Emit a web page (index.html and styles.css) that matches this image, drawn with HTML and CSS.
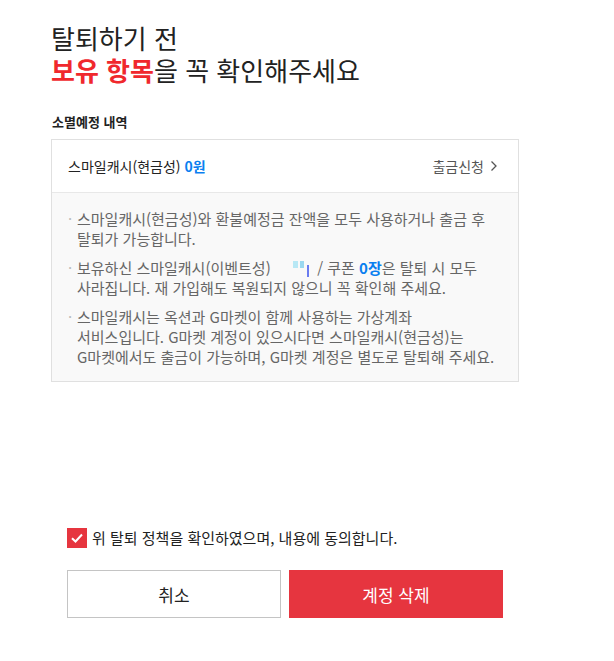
FILE: index.html
```html
<!DOCTYPE html>
<html lang="ko">
<head>
    <meta charset="UTF-8">
    <meta name="viewport" content="width=device-width, initial-scale=1.0">
    <title>회원탈퇴</title>
    <link rel="stylesheet" href="styles.css">
</head>
<body>
    <div class="page">
        <h1 class="title"><span class="line">탈퇴하기 전</span><span class="line"><em>보유 항목</em>을 꼭 확인해주세요</span></h1>

        <h2 class="section-label">소멸예정 내역</h2>
        <div class="box">
            <div class="box-head">
                <span>스마일캐시(현금성) <b class="num">0원</b></span>
                <a class="link" href="#">출금신청 <svg width="8" height="12" viewBox="0 0 8 12"><path d="M1.5 1.5 L6 6 L1.5 10.5" fill="none" stroke="#555" stroke-width="1.3"/></svg></a>
            </div>
            <ul class="notice">
                <li>스마일캐시(현금성)와 환불예정금 잔액을 모두 사용하거나 출금 후<br>탈퇴가 가능합니다.</li>
                <li>보유하신 스마일캐시(이벤트성) <span class="loading"><i class="a"></i><i class="b"></i><i class="c"></i></span> / 쿠폰 <b class="num">0장</b>은 탈퇴 시 모두<br>사라집니다. 재 가입해도 복원되지 않으니 꼭 확인해 주세요.</li>
                <li>스마일캐시는 옥션과 G마켓이 함께 사용하는 가상계좌<br>서비스입니다. G마켓 계정이 있으시다면 스마일캐시(현금성)는<br>G마켓에서도 출금이 가능하며, G마켓 계정은 별도로 탈퇴해 주세요.</li>
            </ul>
        </div>

        <div class="footer">
            <label class="agree">
                <span class="check"><svg width="20" height="20" viewBox="0 0 20 20"><path d="M5 10.2 L8.5 13.5 L15 6.5" fill="none" stroke="#fff" stroke-width="2"/></svg></span>
                위 탈퇴 정책을 확인하였으며, 내용에 동의합니다.
            </label>
            <div class="buttons">
                <button class="btn cancel">취소</button>
                <button class="btn delete">계정 삭제</button>
            </div>
        </div>
    </div>
</body>
</html>
```

FILE: styles.css
```css
body {
    margin: 0;
    font-family: "Noto Sans CJK KR", "Noto Sans", sans-serif;
    color: #222;
    background: #fff;
}

.page {
    width: 468px;
    padding: 22px 0 0 51px;
}

.title {
    margin: 0;
    font-size: 26px;
    line-height: 32px;
    font-weight: 400;
    color: #222;
}

.title .line {
    display: block;
}

.title em {
    font-style: normal;
    font-weight: 700;
    color: #f0282d;
}

.section-label {
    margin: 27px 0 0 1px;
    font-size: 13px;
    line-height: 18px;
    font-weight: 700;
}

.box {
    margin-top: 8px;
    border: 1px solid #e0e0e0;
}

.box-head {
    height: 52px;
    display: flex;
    justify-content: space-between;
    align-items: center;
    padding: 0 20px 0 16px;
    border-bottom: 1px solid #e8e8e8;
    font-size: 14px;
}

.num {
    color: #0a7ff0;
    font-weight: 700;
}

.link {
    display: flex;
    align-items: center;
    gap: 6px;
    color: #555;
    text-decoration: none;
}

.notice {
    margin: 0;
    padding: 16px 4px 14px 17px;
    background: #f9f9f9;
    list-style: none;
    font-size: 15px;
    line-height: 20px;
    color: #666;
    white-space: nowrap;
}

.notice li {
    position: relative;
    padding-left: 8px;
}

.notice li + li {
    margin-top: 9px;
}

.notice li::before {
    content: "·";
    position: absolute;
    left: -1px;
    top: 0;
    color: #bbb;
}

.loading {
    display: inline-block;
    position: relative;
    width: 38px;
    height: 16px;
    vertical-align: -3px;
}

.loading i {
    position: absolute;
    display: block;
}

.loading .a {
    left: 18px;
    top: 0;
    width: 5px;
    height: 7px;
    background: #b8e8f5;
}

.loading .b {
    left: 25px;
    top: 0;
    width: 4px;
    height: 7px;
    background: #9ad8f0;
}

.loading .c {
    left: 32px;
    top: 4px;
    width: 2px;
    height: 12px;
    background: #6a7cf0;
}

.footer {
    margin-top: 146px;
    padding-left: 16px;
    width: 436px;
}

.agree {
    display: flex;
    align-items: center;
    gap: 5px;
    font-size: 15px;
    line-height: 20px;
    color: #222;
}

.check {
    width: 20px;
    height: 20px;
    background: #e6353f;
    display: block;
}

.check svg {
    display: block;
}

.buttons {
    margin-top: 22px;
    display: grid;
    grid-template-columns: 1fr 1fr;
    gap: 8px;
}

.btn {
    height: 48px;
    font-family: inherit;
    font-size: 17px;
    cursor: pointer;
}

.cancel {
    background: #fff;
    border: 1px solid #c4c4c4;
    color: #222;
}

.delete {
    background: #e6353f;
    border: none;
    color: #fff;
}
```
